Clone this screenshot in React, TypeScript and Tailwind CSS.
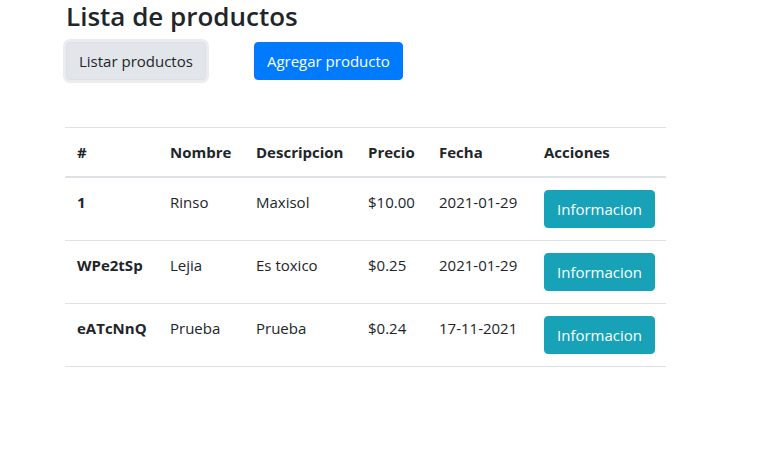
import React from "react";

interface Producto {
  id: string;
  nombre: string;
  descripcion: string;
  precio: string;
  fecha: string;
}

const productos: Producto[] = [
  { id: "1", nombre: "Rinso", descripcion: "Maxisol", precio: "$10.00", fecha: "2021-01-29" },
  { id: "WPe2tSp", nombre: "Lejia", descripcion: "Es toxico", precio: "$0.25", fecha: "2021-01-29" },
  { id: "eATcNnQ", nombre: "Prueba", descripcion: "Prueba", precio: "$0.24", fecha: "17-11-2021" },
];

const App = () => {
  return (
    <div
      className="min-h-screen bg-white pl-[65px] text-[#212529] text-[15px] leading-6"
      style={{ fontFamily: '"Open Sans", "Noto Sans", sans-serif' }}
    >
      <h3 className="text-[26px] leading-[33.6px] font-semibold mb-2 pl-px whitespace-nowrap">Lista de productos</h3>
      <div className="flex items-center gap-[48px] pl-px">
        <button className="h-[38px] px-3 rounded bg-[#e2e6ea] border border-[#dae0e5] shadow-[0_0_0_3px_rgba(216,217,219,0.5)] text-[#212529]">
          Listar productos
        </button>
        <button className="h-[38px] px-3 rounded bg-[#007bff] border border-[#007bff] text-white">
          Agregar producto
        </button>
      </div>

      <table className="mt-[47px] w-[601px] table-fixed border-collapse text-left whitespace-nowrap">
        <thead>
          <tr className="border-t border-[#dee2e6]">
            <th className="w-[93px] p-3 font-bold border-b-2 border-[#dee2e6]">#</th>
            <th className="w-[86px] p-3 font-bold border-b-2 border-[#dee2e6]">Nombre</th>
            <th className="w-[112px] p-3 font-bold border-b-2 border-[#dee2e6]">Descripcion</th>
            <th className="w-[71px] p-3 font-bold border-b-2 border-[#dee2e6]">Precio</th>
            <th className="w-[105px] p-3 font-bold border-b-2 border-[#dee2e6]">Fecha</th>
            <th className="p-3 font-bold border-b-2 border-[#dee2e6]">Acciones</th>
          </tr>
        </thead>
        <tbody>
          {productos.map((p) => (
            <tr key={p.id} className="border-b border-[#dee2e6] align-top">
              <td className="p-3 font-bold">{p.id}</td>
              <td className="p-3">{p.nombre}</td>
              <td className="p-3">{p.descripcion}</td>
              <td className="p-3">{p.precio}</td>
              <td className="p-3">{p.fecha}</td>
              <td className="p-3">
                <button className="h-[38px] px-3 rounded bg-[#17a2b8] border border-[#17a2b8] text-white">
                  Informacion
                </button>
              </td>
            </tr>
          ))}
        </tbody>
      </table>
    </div>
  );
};

export default App;
